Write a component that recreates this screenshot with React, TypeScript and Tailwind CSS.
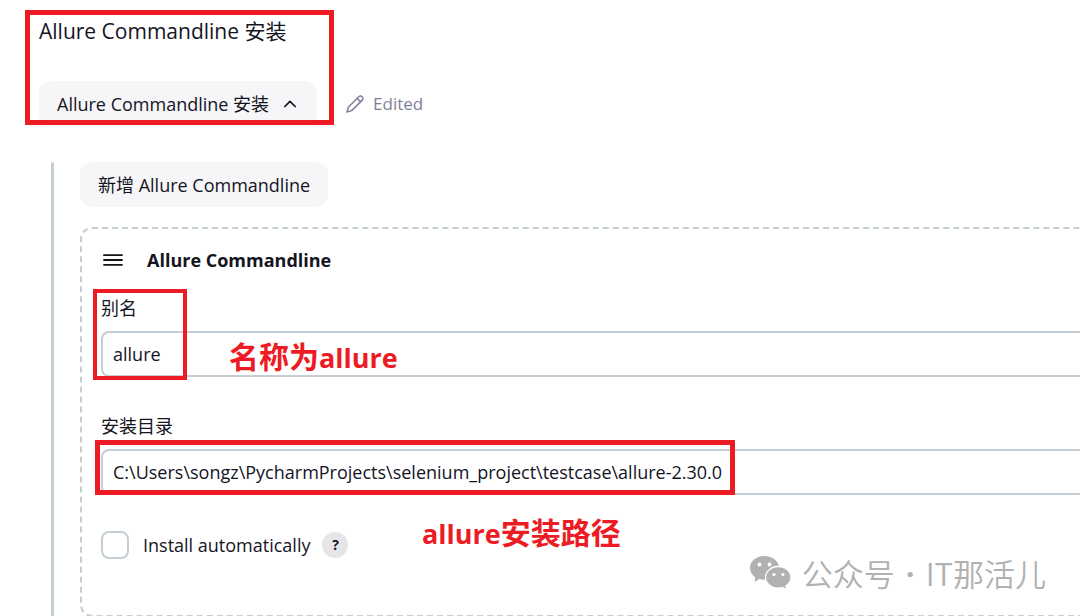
import { useState } from "react";
import type { ReactNode } from "react";

function ChevronUp() {
  return (
    <svg width="14" height="14" viewBox="0 0 14 14" fill="none" stroke="currentColor" strokeWidth="1.7" strokeLinecap="round" strokeLinejoin="round" aria-hidden="true">
      <path d="M1.800 9.500 7 4.300l5.200 5.200" />
    </svg>
  );
}

function Pencil() {
  return (
    <svg width="20" height="20" viewBox="0 0 20 20" fill="none" stroke="currentColor" strokeWidth="1.5" strokeLinecap="round" strokeLinejoin="round" aria-hidden="true">
      <path d="M2 18l1.300-4.800L13.800 2.700a2.300 2.300 0 0 1 3.400 0 2.300 2.300 0 0 1 0 3.400L6.700 16.600 2 18z" />
      <path d="M12.200 4.400l3.400 3.400" />
    </svg>
  );
}

function DragHandle() {
  return (
    <svg width="20" height="14" viewBox="0 0 20 14" fill="none" stroke="currentColor" strokeWidth="1.800" strokeLinecap="round" aria-hidden="true">
      <path d="M1 2.200h18M1 7h18M1 11.800h18" />
    </svg>
  );
}

function WeChat() {
  return (
    <svg width="42" height="36" viewBox="0 0 42 36" aria-hidden="true">
      <path fill="#b1b1b1" d="M15.500 1C7.300 1 1 6.200 1 13c0 3.900 2 7.200 5.300 9.400L5.500 27l5-2.900c1.600.4 3.200.6 5 .6C23.700 24.700 30 19.800 30 13S23.700 1 15.500 1z" />
      <path fill="#b1b1b1" stroke="#fff" strokeWidth="1.300" d="M29.300 11.500c-7.100 0-12.800 4.800-12.800 10.800s5.700 10.800 12.800 10.800c1.600 0 3.100-.2 4.500-.7l4.200 2.300-1.200-3.700c3.100-2 5.200-5.100 5.200-8.700 0-6-5.600-10.800-12.700-10.800z" />
      <g fill="#fff">
        <circle cx="10.500" cy="9.500" r="1.900" />
        <circle cx="20.500" cy="9.500" r="1.900" />
        <circle cx="25" cy="19.500" r="1.600" />
        <circle cx="34" cy="19.500" r="1.600" />
      </g>
    </svg>
  );
}

function Field({ id, label, initial }: { id: string; label: string; initial: string }) {
  const [value, setValue] = useState(initial);
  return (
    <div className="flex flex-col gap-[11px]">
      <label htmlFor={id} className="text-lg leading-6">{label}</label>
      <input
        id={id}
        type="text"
        value={value}
        onChange={(e) => setValue(e.target.value)}
        className="h-[46px] w-full rounded-l-lg border-2 border-r-0 border-[#c3cfd4] bg-white px-[10px] text-lg outline-none"
      />
    </div>
  );
}

function Note({ className, children }: { className: string; children: ReactNode }) {
  return (
    <p className={`pointer-events-none absolute text-[30px] leading-10 font-bold whitespace-nowrap text-[#ed1c24] ${className}`}>
      {children}
    </p>
  );
}

export default function App() {
  return (
    <main className="relative overflow-hidden bg-white pt-4 pl-[39px] font-['Open_Sans','Noto_Sans_CJK_SC',sans-serif] text-[#14141f]">
      <h1 className="text-[21px] leading-[30px]">Allure Commandline 安装</h1>

      <div className="mt-[35px] flex items-center gap-7">
        <button type="button" className="flex h-[45px] items-center gap-[14px] rounded-xl bg-[#f6f6f9] pr-5 pl-[18px] text-lg">
          Allure Commandline 安装
          <ChevronUp />
        </button>
        <span className="flex items-center gap-2 text-[17px] text-[#7f7f99]">
          <Pencil />
          Edited
        </span>
      </div>

      <section className="mt-9 ml-3 flex gap-[26px]">
        <div className="w-[3px] shrink-0 rounded-t-sm bg-[#c3cfd4]" />
        <div className="min-w-0 flex-1">
          <button type="button" className="flex h-[45px] items-center rounded-xl bg-[#f6f6f9] px-[18px] text-lg">
            新增 Allure Commandline
          </button>

          <div className="mt-5 rounded-l-xl border-2 border-r-0 border-dashed border-[#c3cfd4] pt-[18px] pb-14 pl-[19px]">
            <div className="flex h-[26px] items-center gap-6 pl-[2px]">
              <DragHandle />
              <h2 className="text-lg font-bold">Allure Commandline</h2>
            </div>
            <div className="mt-[23px] flex flex-col gap-9">
              <div className="flex flex-col gap-[37px]">
                <Field id="alias" label="别名" initial="allure" />
                <Field id="home" label="安装目录" initial="C:\Users\songz\PycharmProjects\selenium_project\testcase\allure-2.30.0" />
              </div>
              <div className="flex h-7 items-center">
                <input id="auto" type="checkbox" className="size-7 appearance-none rounded-lg border-2 border-[#c3cfd4] bg-white" />
                <label htmlFor="auto" className="ml-[14px] text-lg">Install automatically</label>
                <button type="button" aria-label="Help" className="ml-3 size-[26px] rounded-full bg-[#e6e6e6] text-sm font-bold">?</button>
              </div>
            </div>
          </div>
        </div>
      </section>

      <div className="pointer-events-none absolute top-[10px] left-[25px] h-[115px] w-[309px] border-5 border-[#ed1c24]" />
      <div className="pointer-events-none absolute top-[289px] left-[93px] h-[91px] w-[94px] border-4 border-[#ed1c24]" />
      <div className="pointer-events-none absolute top-[440px] left-[95px] h-[55px] w-[640px] border-5 border-[#ed1c24]" />
      <Note className="top-[337px] left-[229px]">名称为<span className="text-[27px]">allure</span></Note>
      <Note className="top-[513px] left-[422px]"><span className="text-[27px]">allure</span>安装路径</Note>

      <div className="pointer-events-none absolute right-[34px] bottom-[24px] flex items-center gap-[11px] font-['Noto_Sans_CJK_SC',sans-serif] text-[31px] leading-10 font-[350] whitespace-nowrap text-[#b1b1b1]">
        <WeChat />
        <span>公众号</span>
        <span className="font-['Open_Sans',sans-serif] font-bold">·</span>
        <span>IT那活儿</span>
      </div>
    </main>
  );
}
